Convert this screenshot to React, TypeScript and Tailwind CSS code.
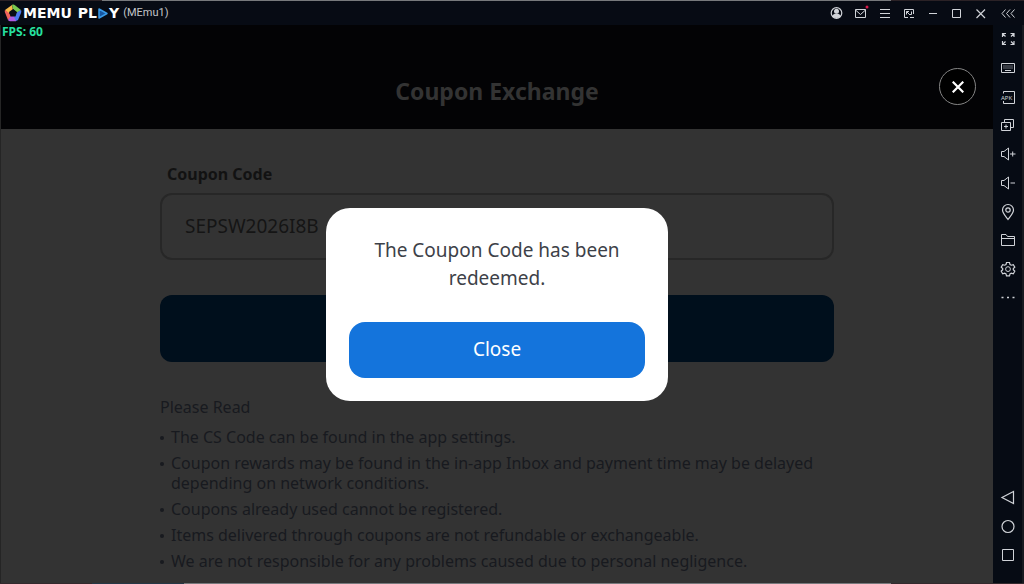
import { useState, type ReactNode } from "react";

const notices = [
  "The CS Code can be found in the app settings.",
  "Coupon rewards may be found in the in-app Inbox and payment time may be delayed depending on network conditions.",
  "Coupons already used cannot be registered.",
  "Items delivered through coupons are not refundable or exchangeable.",
  "We are not responsible for any problems caused due to personal negligence.",
];

function Icon({ children }: { children: ReactNode }) {
  return (
    <svg className="size-4 overflow-visible" viewBox="0 0 16 16" fill="none" stroke="currentColor" strokeWidth="1" aria-hidden="true">
      {children}
    </svg>
  );
}

function ToolButton({ label, children }: { label: string; children: ReactNode }) {
  return (
    <button type="button" aria-label={label} className="flex size-6 items-center justify-center text-[#d0d3d8]">
      <Icon>{children}</Icon>
    </button>
  );
}

function Logo() {
  return (
    <div className="flex items-center">
      <svg className="mr-px size-[18px]" viewBox="0 0 18 18" aria-hidden="true">
        <path d="M8 1 1 6l3 4 5-4z" fill="#f6b84a" />
        <path d="M8 1c1-.7 2-.5 3 .3L17 6l-4 3-4-4z" fill="#78c850" />
        <path d="M1 6c-.5 1-.2 2 .2 3L4 16l4-3-3-4z" fill="#f0625e" />
        <path d="M4 16c1 1.300 2 1.200 3 1.200h5L12 12H7z" fill="#b05be0" />
        <path d="M17 6c.5 1 .3 2 0 3l-3 7-2 1-2-4 2-4z" fill="#4b78f0" />
        <path d="m9 5 4 3-1.500 4.500h-5L5 8z" fill="#080c16" />
      </svg>
      <span className="flex items-center font-['DejaVu_Sans',sans-serif] text-sm font-bold leading-none text-white">
        <span>MEMU</span>
        <span className="ml-1.5">PL</span>
        <svg className="mx-px h-[11px] w-[10px]" viewBox="0 0 10 11" aria-hidden="true">
          <path d="M1 1v9l8-4.500z" fill="#1756a0" stroke="#3a9be8" strokeWidth="1.500" strokeLinejoin="round" />
        </svg>
        <span>Y</span>
      </span>
      <span className="ml-1 font-['Roboto',sans-serif] text-[11px] text-[#c3c5c9]">(MEmu1)</span>
    </div>
  );
}

function TitleBar() {
  return (
    <header className="flex h-6 items-center justify-between bg-[#070b14] px-1">
      <Logo />
      <div className="flex items-center">
        <ToolButton label="Account">
          <circle cx="8.500" cy="8" r="5.300" strokeWidth="1.200" />
          <circle cx="8.500" cy="6.300" r="2.500" fill="currentColor" stroke="none" />
          <path d="M4.200 11.500c.5-2.200 2.300-3 4.300-3s3.800.8 4.300 3c-3 2-5.600 2-8.600 0z" fill="currentColor" stroke="none" />
        </ToolButton>
        <ToolButton label="Messages">
          <path d="M3.500 4.500h10v8h-10zM3.500 5l5 4.500 5-4.500" />
          <circle cx="15" cy="2" r="1.500" fill="#d81b4a" stroke="none" />
        </ToolButton>
        <ToolButton label="Menu">
          <path d="M4 4.500h10M4 8.500h10M4 12.500h10" />
        </ToolButton>
        <ToolButton label="Small window">
          <path d="M8 12.500H4.500v-8h9V9M6.500 9.500v-3H9M6.500 6.500 9 9M11.500 6.500v3H9M10 12.500h4" />
        </ToolButton>
        <ToolButton label="Minimize">
          <path d="M5 8.500h8" />
        </ToolButton>
        <ToolButton label="Maximize">
          <path d="M4.500 4.500h8v8h-8z" />
        </ToolButton>
        <ToolButton label="Close window">
          <path d="m4.500 4.500 8.500 8.500M13 4.500 4.500 13" strokeWidth="1.200" />
        </ToolButton>
        <div className="ml-1">
          <ToolButton label="Collapse sidebar">
            <path d="M5.500 4.500 2 8.500l3.500 4M10 4.500l-3.500 4 3.500 4M14.500 4.500l-3.500 4 3.500 4" />
          </ToolButton>
        </div>
      </div>
    </header>
  );
}

function SideBar() {
  return (
    <aside className="flex w-[31px] shrink-0 flex-col items-center justify-between border-r-2 border-[#171a20] bg-[#060b14] pb-4 pt-0.5">
      <div className="flex h-[283px] flex-col justify-between">
        <ToolButton label="Full screen">
          <path d="M2.500 6V2.500H6M2.500 2.500l3 3M10.500 2.500H14V6M14 2.500l-3 3M2.500 10v3.500H6M2.500 13.500l3-3M10.500 13.500H14V10M14 13.500l-3-3" strokeWidth="1.200" />
        </ToolButton>
        <ToolButton label="Keyboard mapping">
          <path d="M1.500 3.500h13v9h-13z" />
          <path d="M3.500 6h9M3.500 8h9" strokeDasharray="1 1" />
          <path d="M5 10.500h6" />
        </ToolButton>
        <ToolButton label="Install APK">
          <path d="M3.500 4.500v-2h11v12h-11v-2.500" />
          <text x="1" y="10.500" fontSize="6" fontWeight="400" fill="currentColor" stroke="none">APK</text>
        </ToolButton>
        <ToolButton label="Multiple instances">
          <path d="M1.500 5.500h9v8h-9zM4.500 5V2.500h9v8H11M6 7.500v4M4 9.500h4" />
        </ToolButton>
        <ToolButton label="Volume up">
          <path d="M1.500 5.500H4l4.500-3.500v12L4 10.500H1.500zM10 8h5.500M12.700 5.500v5" />
        </ToolButton>
        <ToolButton label="Volume down">
          <path d="M1.500 5.500H4l4.500-3.500v12L4 10.500H1.500zM10.500 8H15" />
        </ToolButton>
        <ToolButton label="Location">
          <path d="M8 15.500C5 11.500 2.500 9 2.500 6a5.500 5.500 0 0 1 11 0c0 3-2.500 5.500-5.500 9.500z" strokeWidth="1.200" />
          <circle cx="8" cy="6" r="2.200" strokeWidth="1.200" />
        </ToolButton>
        <ToolButton label="Shared folder">
          <path d="M1.500 13.500v-11h4.500l1.500 2h7v9zM1.500 6.500h13" />
        </ToolButton>
        <ToolButton label="Settings">
          <path d="M6.500 1.500h3l.5 2 1.300.7 2-.6 1.500 2.500L13.300 7.500v1.300l1.500 1.400-1.500 2.500-2-.6-1.300.8-.5 1.900h-3L6 12.900l-1.300-.8-2 .6-1.500-2.500 1.500-1.400V7.500L1.200 6.100l1.500-2.500 2 .6L6 3.500z" strokeWidth="1.200" />
          <circle cx="8" cy="8.100" r="2.400" />
        </ToolButton>
        <ToolButton label="More">
          <path d="M1.500 7.500h2M7 7.500h2M12.500 7.500h2" strokeWidth="1.600" />
        </ToolButton>
      </div>
      <div className="flex flex-col gap-[5px]">
        <ToolButton label="Back">
          <path d="M13.500 2.500v12L2 8.500z" strokeWidth="1.200" />
        </ToolButton>
        <ToolButton label="Home">
          <circle cx="8" cy="8.500" r="6" strokeWidth="1.200" />
        </ToolButton>
        <ToolButton label="Recent apps">
          <path d="M2.500 2.500h11v11h-11z" />
        </ToolButton>
      </div>
    </aside>
  );
}

export default function App() {
  const [code, setCode] = useState("SEPSW2026I8B");
  const [open, setOpen] = useState(true);

  return (
    <div className="flex h-screen flex-col overflow-hidden bg-[#333333] font-['Noto_Sans',sans-serif]">
      <div className="flex h-px shrink-0 bg-[#2b2226]">
        <div className="ml-[10%] w-[77%] bg-[#77797c]" />
      </div>
      <TitleBar />
      <div className="flex min-h-0 flex-1">
        <main className="relative min-w-0 flex-1 border-l border-[#252525]">
          <div className="relative flex h-[104px] items-center justify-center bg-[#030305] pt-7">
            <span className="absolute left-px top-0 text-xs font-bold leading-[14px] text-[#27e0a0]">FPS: 60</span>
            <h1 className="text-[23px] font-bold leading-8 text-[#333333]">Coupon Exchange</h1>
            <button type="button" aria-label="Close page" className="absolute right-[17px] top-[43px] flex size-[37px] items-center justify-center rounded-full border border-[#858585] bg-black text-white">
              <svg className="size-3" viewBox="0 0 12 12" stroke="currentColor" strokeWidth="2.200" aria-hidden="true">
                <path d="m.7.7 10.600 10.600M11.300.7.700 11.300" />
              </svg>
            </button>
          </div>
          <section className="mx-auto w-full max-w-[674px] pt-[33px]">
            <form onSubmit={(e) => { e.preventDefault(); setOpen(true); }}>
              <label htmlFor="code" className="block pl-[7px] text-base font-bold leading-6 text-[#121212]">Coupon Code</label>
              <input
                id="code"
                value={code}
                onChange={(e) => setCode(e.target.value)}
                className="mt-[7px] block h-[67px] w-full rounded-xl border-2 border-[#272727] bg-transparent px-[23px] pb-0.5 text-[19px] text-[#151515] outline-none"
              />
              <button type="submit" aria-label="Redeem coupon" className="mt-[35px] block h-[67px] w-full rounded-xl bg-[#000f1c]" />
            </form>
            <h2 className="mt-[33px] text-base leading-6 text-[#181a1f]">Please Read</h2>
            <ul className="mt-2 flex flex-col gap-1.5 text-base leading-5 text-[#181a1f]">
              {notices.map((notice) => (
                <li key={notice} className="flex">
                  <span className="mr-[7px] mt-[9px] size-1 shrink-0 rounded-full bg-[#181a1f]" />
                  {notice}
                </li>
              ))}
            </ul>
          </section>
          {open && (
            <div className="absolute inset-0 flex items-center justify-center">
              <div role="dialog" aria-modal="true" aria-labelledby="message" className="w-[342px] rounded-3xl bg-white px-[23px] pb-[23px] pt-7 text-center">
                <p id="message" className="px-4 text-[19px] leading-7 text-[#3d4148]">The Coupon Code has been redeemed.</p>
                <button type="button" onClick={() => setOpen(false)} className="mt-[30px] h-14 w-full rounded-2xl bg-[#1474dc] text-[19px] text-white">Close</button>
              </div>
            </div>
          )}
        </main>
        <SideBar />
      </div>
      <div className="flex h-px shrink-0 bg-[#33292d]">
        <div className="ml-[9%] w-[9%] bg-[#263846]" />
        <div className="w-[69%] bg-[#77797c]" />
      </div>
    </div>
  );
}
